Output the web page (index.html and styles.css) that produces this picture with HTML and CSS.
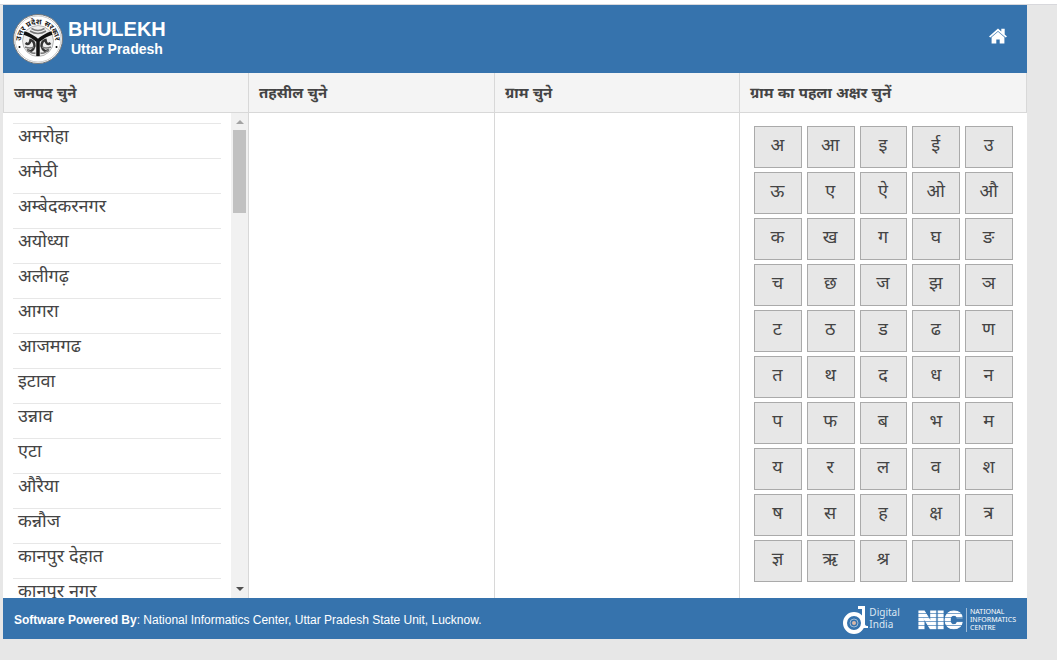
FILE: index.html
```html
<!DOCTYPE html>
<html lang="hi">
<head>
    <meta charset="UTF-8">
    <meta name="viewport" content="width=device-width, initial-scale=1.0">
    <title>Bhulekh Uttar Pradesh</title>
    <link rel="stylesheet" href="styles.css">
</head>
<body>

<div class="topline"></div>

<div class="container">
    <header class="header">
        <svg class="emblem" viewBox="0 0 100 100" aria-hidden="true">
            <defs>
                <path id="arc" d="M18 66 A34 34 0 1 1 82 66"/>
            </defs>
            <circle cx="50" cy="50" r="49" fill="#fff" stroke="#777" stroke-width="2"/>
            <circle cx="50" cy="50" r="46" fill="none" stroke="#999" stroke-width="1"/>
            <text class="emblem-text"><textPath href="#arc" startOffset="50%" text-anchor="middle">उत्तर प्रदेश सरकार</textPath></text>
            <circle cx="50" cy="54" r="31" fill="#eee" stroke="#777" stroke-width="1"/>
            <path d="M22 38 Q36 42 50 54 Q64 42 78 38 M50 52 V84" fill="none" stroke="#111" stroke-width="7"/>
            <path d="M25 58 q8 6 10 -6 q8 2 8 12 q-4 14 -14 8 M75 58 q-8 6 -10 -6 q-8 2 -8 12 q4 14 14 8" fill="none" stroke="#333" stroke-width="5"/>
            <path d="M28 70 q8 10 17 8 M72 70 q-8 10 -17 8 M24 66 q10 4 18 0 M76 66 q-10 4 -18 0 M34 34 q16 10 32 0 M37 29 q13 8 26 0" fill="none" stroke="#777" stroke-width="3"/>
            <circle cx="13" cy="66" r="2"/>
            <circle cx="87" cy="66" r="2"/>
        </svg>
        <div class="brand">
            <h1>BHULEKH</h1>
            <p>Uttar Pradesh</p>
        </div>
        <a class="home" href="#" aria-label="Home">
            <svg viewBox="0 0 18 15">
                <path d="M9 0 L0 8 L1.3 9.1 L9 2.4 L16.7 9.1 L18 8 L15.7 5.9 V0.3 H12.3 V2.9 Z M9 3.2 L2.6 8.8 V15 H7.3 V11 H10.7 V15 H15.4 V8.8 Z"/>
            </svg>
        </a>
    </header>

    <main class="columns">
        <section class="column">
            <h2>जनपद चुने</h2>
            <div class="scroller">
                <ul class="list">
                    <li>अमरोहा</li>
                    <li>अमेठी</li>
                    <li>अम्बेदकरनगर</li>
                    <li>अयोध्या</li>
                    <li>अलीगढ़</li>
                    <li>आगरा</li>
                    <li>आजमगढ</li>
                    <li>इटावा</li>
                    <li>उन्नाव</li>
                    <li>एटा</li>
                    <li>औरैया</li>
                    <li>कन्नौज</li>
                    <li>कानपुर देहात</li>
                    <li>कानपुर नगर</li>
                </ul>
                <div class="scrollbar">
                    <span class="arrow up"></span>
                    <span class="thumb"></span>
                    <span class="arrow down"></span>
                </div>
            </div>
        </section>
        <section class="column">
            <h2>तहसील चुने</h2>
        </section>
        <section class="column">
            <h2>ग्राम चुने</h2>
        </section>
        <section class="column letters-column">
            <h2>ग्राम का पहला अक्षर चुनें</h2>
            <div class="letters">
                <button>अ</button><button>आ</button><button>इ</button><button>ई</button><button>उ</button>
                <button>ऊ</button><button>ए</button><button>ऐ</button><button>ओ</button><button>औ</button>
                <button>क</button><button>ख</button><button>ग</button><button>घ</button><button>ङ</button>
                <button>च</button><button>छ</button><button>ज</button><button>झ</button><button>ञ</button>
                <button>ट</button><button>ठ</button><button>ड</button><button>ढ</button><button>ण</button>
                <button>त</button><button>थ</button><button>द</button><button>ध</button><button>न</button>
                <button>प</button><button>फ</button><button>ब</button><button>भ</button><button>म</button>
                <button>य</button><button>र</button><button>ल</button><button>व</button><button>श</button>
                <button>ष</button><button>स</button><button>ह</button><button>क्ष</button><button>त्र</button>
                <button>ज्ञ</button><button>ऋ</button><button>श्र</button><button></button><button></button>
            </div>
        </section>
    </main>

    <footer class="footer">
        <p><b>Software Powered By</b>: National Informatics Center, Uttar Pradesh State Unit, Lucknow.</p>
        <div class="digital">
            <svg viewBox="0 0 25 28" aria-hidden="true">
                <circle cx="11" cy="17" r="9" fill="none" stroke="#fff" stroke-width="4"/>
                <path d="M15 0 H22 V18 Q22 20 25 20 V22 H19 V3 H15 Z" fill="#fff"/>
                <circle cx="11" cy="17" r="4" fill="none" stroke="#9dbbd8" stroke-width="1"/>
                <circle cx="11" cy="17" r="2" fill="#d9b8a8"/>
            </svg>
            <span>Digital<br>India</span>
        </div>
        <div class="nic">
            <b class="nic-mark">NIC</b>
            <span>NATIONAL<br>INFORMATICS<br>CENTRE</span>
        </div>
    </footer>
</div>

</body>
</html>
```
FILE: styles.css
```css
* {
    box-sizing: border-box;
}
body {
    margin: 0;
    background-color: #e7e7e7;
    color: #444;
    font-family: "Liberation Sans", Arial, "Noto Sans Devanagari", "Noto Sans", sans-serif;
}
h1, h2, p, ul {
    margin: 0;
    padding: 0;
}
.topline {
    height: 5px;
    background-color: #fff;
    border-bottom: 1px solid #d8d8dc;
}
.container {
    margin: 0 30px 0 3px;
    background-color: #fff;
}
.header {
    display: flex;
    align-items: center;
    height: 68px;
    padding: 0 20px 0 10px;
    background-color: #3673ad;
    color: #fff;
}
.emblem {
    width: 50px;
    height: 50px;
}
.emblem-text {
    font-size: 15px;
    font-weight: bold;
    fill: #222;
}
.brand {
    margin-left: 5px;
    padding-bottom: 2px;
    font-weight: bold;
}
.brand h1 {
    font-size: 20px;
    line-height: 22px;
}
.brand p {
    padding-left: 3px;
    font-size: 14px;
    line-height: 18px;
}
.home {
    margin-left: auto;
    padding-bottom: 6px;
}
.home svg {
    display: block;
    width: 18px;
    height: 16px;
    fill: #fff;
}
.columns {
    display: grid;
    grid-template-columns: 246fr 246fr 245fr 287fr;
}
.column {
    border-right: 1px solid #d8d8d8;
}
.column:last-child {
    border-right: 0;
}
.column h2 {
    height: 40px;
    padding-left: 10px;
    background-color: #f4f4f4;
    border-bottom: 1px solid #d8d8d8;
    font-size: 15px;
    line-height: 40px;
}
.column:first-child h2 {
    border-left: 1px solid #d8d8d8;
}
.letters-column h2 {
    border-right: 1px solid #d8d8d8;
}
.scroller {
    display: flex;
    height: 485px;
    overflow: hidden;
}
.list {
    flex: 1;
    padding: 10px 10px 0;
    list-style: none;
}
.list li {
    height: 35px;
    padding-left: 5px;
    border-top: 1px solid #e7e7e7;
    font-size: 18px;
    line-height: 25px;
}
.scrollbar {
    display: flex;
    flex-direction: column;
    align-items: center;
    width: 17px;
    padding: 7px 2px;
    background-color: #f1f1f1;
}
.arrow {
    border: 4px solid transparent;
}
.up {
    border-top: 0;
    border-bottom-color: #a3a3a3;
}
.down {
    margin-top: auto;
    border-bottom: 0;
    border-top-color: #505050;
}
.thumb {
    width: 13px;
    height: 83px;
    margin-top: 6px;
    background-color: #c1c1c1;
}
.letters {
    display: grid;
    grid-template-columns: repeat(5, 1fr);
    gap: 4px 5px;
    padding: 13px 14px 0;
}
.letters button {
    height: 42px;
    padding: 0 1px 2px 0;
    background-color: #e7e7e7;
    border: 1px solid #aaa;
    color: #444;
    font-family: inherit;
    font-size: 18px;
}
.footer {
    display: flex;
    align-items: center;
    height: 41px;
    padding: 2px 11px 0;
    background-color: #3673ad;
    color: #fff;
    font-size: 12px;
}
.digital {
    display: flex;
    margin-left: auto;
    font-family: "Noto Sans", sans-serif;
    font-size: 10px;
    line-height: 12px;
    color: #dce8f3;
}
.digital svg {
    width: 25px;
    height: 28px;
    margin-right: 1px;
}
.nic {
    display: flex;
    align-items: center;
    margin-left: 18px;
}
.nic-mark {
    padding-right: 3px;
    font-family: Inter, "Liberation Sans", sans-serif;
    font-size: 25px;
    font-weight: 900;
    line-height: 20px;
    color: transparent;
    -webkit-text-stroke: 1px transparent;
    background: repeating-linear-gradient(#fff 0, #fff 3px, #7ba4cb 3px, #7ba4cb 4px);
    background-clip: text;
    -webkit-background-clip: text;
}
.nic span {
    padding-left: 3px;
    border-left: 1px solid #9dbbd8;
    font-family: "Noto Sans", sans-serif;
    font-size: 7px;
    line-height: 8px;
    color: #fff;
}
```
